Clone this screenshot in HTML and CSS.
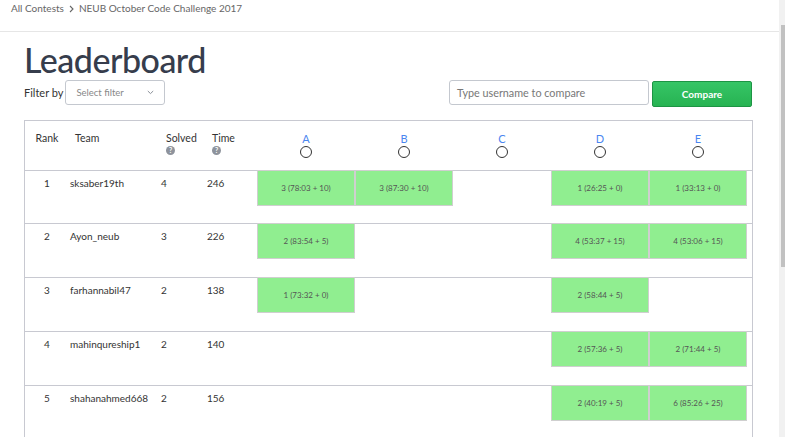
FILE: index.html
```html
<!DOCTYPE html>
<html>
<head>
<meta charset="utf-8">
<link rel="stylesheet" href="styles.css">
</head>
<body>
<div class="page">
  <div class="topbar">
    <span class="crumb">All Contests</span>
    <svg class="chev" width="5" height="8" viewBox="0 0 5 8"><path d="M1 1 L4 4 L1 7" fill="none" stroke="#666" stroke-width="1.1"/></svg>
    <span class="crumb">NEUB October Code Challenge 2017</span>
  </div>
  <div class="content">
    <h1 class="title">Leaderboard</h1>
    <div class="controls">
      <div class="filter">
        <span class="filter-label">Filter by</span>
        <div class="select">
          <span>Select filter</span>
          <svg class="caret" width="7" height="5" viewBox="0 0 7 5"><path d="M0.8 1 L3.5 3.6 L6.2 1" fill="none" stroke="#8a8f98" stroke-width="1"/></svg>
        </div>
      </div>
      <div class="compare">
        <div class="input">Type username to compare</div>
        <div class="btn">Compare</div>
      </div>
    </div>

    <div class="board">
      <div class="row head">
        <div class="c rank">Rank</div>
        <div class="c team">Team</div>
        <div class="c stat">Solved<span class="q">?</span></div>
        <div class="c stat">Time<span class="q">?</span></div>
        <div class="c prob"><span class="letter">A</span><span class="radio"></span></div>
        <div class="c prob"><span class="letter">B</span><span class="radio"></span></div>
        <div class="c prob"><span class="letter">C</span><span class="radio"></span></div>
        <div class="c prob"><span class="letter">D</span><span class="radio"></span></div>
        <div class="c prob"><span class="letter">E</span><span class="radio"></span></div>
      </div>

      <div class="row first">
        <div class="c rank">1</div>
        <div class="c team">sksaber19th</div>
        <div class="c stat">4</div>
        <div class="c stat">246</div>
        <div class="c cell"><div class="ac">3 (78:03 + 10)</div></div>
        <div class="c cell"><div class="ac">3 (87:30 + 10)</div></div>
        <div class="c cell"></div>
        <div class="c cell"><div class="ac">1 (26:25 + 0)</div></div>
        <div class="c cell"><div class="ac">1 (33:13 + 0)</div></div>
      </div>

      <div class="row">
        <div class="c rank">2</div>
        <div class="c team">Ayon_neub</div>
        <div class="c stat">3</div>
        <div class="c stat">226</div>
        <div class="c cell"><div class="ac">2 (83:54 + 5)</div></div>
        <div class="c cell"></div>
        <div class="c cell"></div>
        <div class="c cell"><div class="ac">4 (53:37 + 15)</div></div>
        <div class="c cell"><div class="ac">4 (53:06 + 15)</div></div>
      </div>

      <div class="row">
        <div class="c rank">3</div>
        <div class="c team">farhannabil47</div>
        <div class="c stat">2</div>
        <div class="c stat">138</div>
        <div class="c cell"><div class="ac">1 (73:32 + 0)</div></div>
        <div class="c cell"></div>
        <div class="c cell"></div>
        <div class="c cell"><div class="ac">2 (58:44 + 5)</div></div>
        <div class="c cell"></div>
      </div>

      <div class="row">
        <div class="c rank">4</div>
        <div class="c team">mahinqureship1</div>
        <div class="c stat">2</div>
        <div class="c stat">140</div>
        <div class="c cell"></div>
        <div class="c cell"></div>
        <div class="c cell"></div>
        <div class="c cell"><div class="ac">2 (57:36 + 5)</div></div>
        <div class="c cell"><div class="ac">2 (71:44 + 5)</div></div>
      </div>

      <div class="row">
        <div class="c rank">5</div>
        <div class="c team">shahanahmed668</div>
        <div class="c stat">2</div>
        <div class="c stat">156</div>
        <div class="c cell"></div>
        <div class="c cell"></div>
        <div class="c cell"></div>
        <div class="c cell"><div class="ac">2 (40:19 + 5)</div></div>
        <div class="c cell"><div class="ac">6 (85:26 + 25)</div></div>
      </div>
    </div>
  </div>
</div>
<div class="scrollbar"><div class="thumb"></div></div>
</body>
</html>
```

FILE: styles.css
```css
html, body {
  margin: 0;
  height: 100%;
  overflow: hidden;
}
body {
  display: flex;
  font-family: "Lato", "Open Sans", sans-serif;
  color: #333;
  background: #fff;
}
.page {
  flex: 1;
  min-width: 0;
}
.scrollbar {
  width: 6px;
  background: #f1f1f1;
  padding-top: 25px;
  box-sizing: border-box;
}
.thumb {
  width: 4px;
  margin-left: 2px;
  height: 242px;
  background: #c1c1c1;
}
.topbar {
  height: 31px;
  border-bottom: 1px solid #e6e6e6;
  padding-left: 11px;
  font-size: 10px;
  line-height: 17px;
  color: #666;
  display: flex;
  align-items: flex-start;
}
.chev {
  margin: 5px 5px 0 5px;
}
.content {
  padding: 0 26px 0 24px;
}
.title {
  margin: 8px 0 0 0;
  font-size: 34px;
  font-weight: 500;
  line-height: 40px;
  color: #363d4c;
  letter-spacing: -0.5px;
}
.controls {
  margin-top: 0;
  display: flex;
  justify-content: space-between;
  align-items: flex-start;
  height: 26px;
}
.filter {
  display: flex;
  align-items: center;
}
.filter-label {
  font-size: 11px;
  color: #333;
  margin-right: 2px;
}
.select {
  width: 100px;
  height: 25px;
  box-sizing: border-box;
  border: 1px solid #c4c8cf;
  border-radius: 3px;
  display: flex;
  align-items: center;
  justify-content: space-between;
  padding: 0 10px 0 10px;
  font-size: 9.5px;
  color: #888;
}
.compare {
  display: flex;
  align-items: flex-start;
  margin-right: 1px;
}
.input {
  width: 200px;
  height: 25px;
  box-sizing: border-box;
  border: 1px solid #c4c8cf;
  border-radius: 3px;
  padding-left: 7px;
  font-size: 10.8px;
  line-height: 23px;
  color: #777;
}
.btn {
  margin-left: 3px;
  width: 100px;
  height: 26px;
  box-sizing: border-box;
  border: 1px solid #1d9444;
  border-radius: 2px;
  background: linear-gradient(#36c566, #27b352);
  color: #fff;
  font-size: 10px;
  font-weight: 700;
  text-align: center;
  line-height: 24px;
  margin-top: 1px;
}
.board {
  margin-top: 14px;
  border: 1px solid #c8c9d1;
  border-bottom: none;
  height: 320px;
}
.row {
  display: grid;
  grid-template-columns: 44px 97px 46px 45px repeat(5, 98px);
  height: 53px;
  border-top: 1px solid #c8c9d1;
  font-size: 10px;
  color: #333;
}
.row.first {
  height: 52px;
}
.row.head {
  border-top: none;
  height: 49px;
  font-size: 10.5px;
}
.c {
  box-sizing: border-box;
}
.rank {
  text-align: center;
  padding-top: 6px;
}
.team {
  padding-left: 1px;
  padding-top: 6px;
}
.stat {
  padding-top: 6px;
  margin-left: -5px;
  display: flex;
  flex-direction: column;
  align-items: flex-start;
}
.head .rank, .head .stat {
  padding-top: 11px;
}
.head .team {
  padding-top: 11px;
  padding-left: 6px;
}
.head .stat {
  margin-left: 0;
}
.q {
  margin-top: 2px;
  width: 9px;
  height: 9px;
  border-radius: 50%;
  background: #8e939c;
  color: #fff;
  font-size: 7px;
  font-weight: 700;
  line-height: 9px;
  text-align: center;
}
.prob {
  display: flex;
  flex-direction: column;
  align-items: center;
  padding-top: 11px;
}
.letter {
  color: #4a86f0;
  font-size: 11px;
  line-height: 13px;
}
.radio {
  margin-top: 1px;
  width: 10px;
  height: 10px;
  border: 1.3px solid #333;
  border-radius: 50%;
}
.cell {
  padding: 0;
}
.ac {
  height: 36px;
  box-sizing: border-box;
  border: 1px solid #cfcfcf;
  background: #90ee90;
  color: #555;
  font-size: 8px;
  display: flex;
  align-items: center;
  justify-content: center;
  margin-top: -1px;
}
```
